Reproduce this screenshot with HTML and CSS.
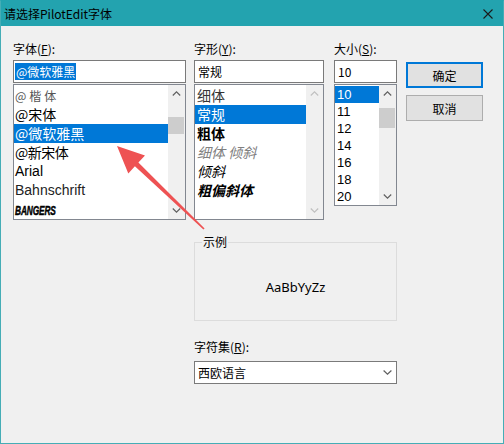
FILE: index.html
```html
<!DOCTYPE html>
<html lang="zh-CN">

<head>
    <meta charset="UTF-8">
    <meta name="viewport" content="width=device-width, initial-scale=1.0">
    <title>请选择PilotEdit字体</title>
    <link rel="stylesheet" href="styles.css">
</head>

<body>
    <div class="window">
        <div class="titlebar">
            <span class="title">请选择PilotEdit字体</span>
            <svg class="close" width="10" height="10" viewBox="0 0 10 10">
                <path d="M0.5 0.5 L9.5 9.5 M9.5 0.5 L0.5 9.5" stroke="#1a1a1a" stroke-width="1.1" fill="none" />
            </svg>
        </div>

        <div class="dialog">
            <div class="top-row">
                <!-- font family -->
                <div class="col col-font">
                    <label class="label">字体(<u>F</u>):</label>
                    <div class="field"><span class="picked">@微软雅黑</span></div>
                    <div class="listbox list-font">
                        <ul class="items">
                            <li class="f-kai">@楷体</li>
                            <li>@宋体</li>
                            <li class="selected">@微软雅黑</li>
                            <li class="f-nsong">@新宋体</li>
                            <li class="f-latin">Arial</li>
                            <li class="f-latin f-bahn">Bahnschrift</li>
                            <li><span class="f-bangers">BANGERS</span></li>
                        </ul>
                        <div class="scrollbar">
                            <span class="sb-btn">
                                <svg width="9" height="5" viewBox="0 0 9 5"><polyline points="0.8,4.5 4.5,0.9 8.2,4.5" /></svg>
                            </span>
                            <span class="sb-track"><span class="thumb thumb-font"></span></span>
                            <span class="sb-btn">
                                <svg width="9" height="5" viewBox="0 0 9 5"><polyline points="0.8,0.5 4.5,4.1 8.2,0.5" /></svg>
                            </span>
                        </div>
                    </div>
                </div>

                <!-- font style -->
                <div class="col col-style">
                    <label class="label">字形(<u>Y</u>):</label>
                    <div class="field field-pad">常规</div>
                    <div class="listbox">
                        <ul class="items items-pad">
                            <li class="s-thin">细体</li>
                            <li class="selected">常规</li>
                            <li class="s-bold">粗体</li>
                            <li class="s-thin-italic">细体 倾斜</li>
                            <li class="s-italic">倾斜</li>
                            <li class="s-bold-italic">粗偏斜体</li>
                        </ul>
                        <div class="scrollbar disabled">
                            <span class="sb-btn">
                                <svg width="9" height="5" viewBox="0 0 9 5"><polyline points="0.8,4.5 4.5,0.9 8.2,4.5" /></svg>
                            </span>
                            <span class="sb-track"></span>
                            <span class="sb-btn">
                                <svg width="9" height="5" viewBox="0 0 9 5"><polyline points="0.8,0.5 4.5,4.1 8.2,0.5" /></svg>
                            </span>
                        </div>
                    </div>
                </div>

                <!-- font size -->
                <div class="col col-size">
                    <label class="label">大小(<u>S</u>):</label>
                    <div class="field field-pad">10</div>
                    <div class="listbox list-size">
                        <ul class="items items-pad">
                            <li class="selected">10</li>
                            <li>11</li>
                            <li>12</li>
                            <li>14</li>
                            <li>16</li>
                            <li>18</li>
                            <li>20</li>
                        </ul>
                        <div class="scrollbar">
                            <span class="sb-btn">
                                <svg width="9" height="5" viewBox="0 0 9 5"><polyline points="0.8,4.5 4.5,0.9 8.2,4.5" /></svg>
                            </span>
                            <span class="sb-track"><span class="thumb thumb-size"></span></span>
                            <span class="sb-btn">
                                <svg width="9" height="5" viewBox="0 0 9 5"><polyline points="0.8,0.5 4.5,4.1 8.2,0.5" /></svg>
                            </span>
                        </div>
                    </div>
                </div>

                <div class="buttons">
                    <button type="button" class="btn btn-default">确定</button>
                    <button type="button" class="btn">取消</button>
                </div>
            </div>

            <div class="lower">
                <fieldset class="sample-group">
                    <legend>示例</legend>
                    <div class="sample">AaBbYyZz</div>
                </fieldset>

                <label class="label charset-label">字符集(<u>R</u>):</label>
                <div class="combo">
                    <span>西欧语言</span>
                    <svg width="9" height="5" viewBox="0 0 9 5"><polyline points="0.6,0.5 4.5,4.2 8.4,0.5" /></svg>
                </div>
            </div>
        </div>

        <!-- red pointer drawn on top of the dialog -->
        <svg class="pointer" width="504" height="444" viewBox="0 0 504 444">
            <polygon points="117,146 145,155.5 138.4,162.6 204.6,228.4 203.4,229.6 134.9,166.3 128.3,173.6" fill="#ee5253" />
        </svg>
    </div>
</body>

</html>
```

FILE: styles.css
```css
body {
    margin: 0;
    background-color: #f0f0f0;
    font-family: "Noto Sans CJK SC", "Noto Sans", sans-serif;
    font-size: 12px;
    color: #000;
}

.window {
    position: relative;
    width: 504px;
    height: 444px;
    box-sizing: border-box;
    border: 1px solid #45adb6;
    border-top-color: #23a3af;
    background-color: #f0f0f0;
}

.titlebar {
    display: flex;
    align-items: center;
    justify-content: space-between;
    height: 25px;
    padding-left: 3px;
    background-color: #23a3af;
}

.title {
    font-size: 12px;
    line-height: 16px;
}

.close {
    margin-right: 10px;
}

.dialog {
    padding: 15px 0 0 12px;
}

.top-row {
    display: flex;
}

.col-font {
    width: 173px;
    margin-right: 8px;
}

.col-style {
    width: 130px;
    margin-right: 10px;
}

.col-size {
    width: 63px;
    margin-right: 9px;
}

.label {
    display: block;
    height: 16px;
    line-height: 16px;
    margin-bottom: 3px;
    white-space: nowrap;
}

/* text boxes above the lists */
.field {
    height: 23px;
    box-sizing: border-box;
    border: 1px solid #7a7a7a;
    background-color: #fff;
    padding: 2px 1px;
    line-height: 17px;
    margin-bottom: 1px;
    white-space: nowrap;
}

.field-pad {
    padding-left: 3px;
}

.picked {
    background-color: #0078d7;
    color: #fff;
    padding: 0 1px;
}

.listbox {
    display: flex;
    height: 136px;
    box-sizing: border-box;
    border: 1px solid #828790;
    background-color: #fff;
}

.list-size {
    height: 122px;
}

.items {
    flex: 1;
    list-style: none;
    margin: 0;
    padding: 1px 0 0;
    overflow: hidden;
}

.items li {
    height: 19px;
    line-height: 19px;
    font-size: 14px;
    padding-left: 1px;
    white-space: nowrap;
}

.items-pad li {
    padding-left: 2px;
}

.list-size .items li {
    height: 17px;
    line-height: 17px;
    font-size: 13px;
    font-family: "Liberation Sans", sans-serif;
}

.items li.selected {
    background-color: #0078d7;
    color: #fff;
}

/* font list entries shown in their own face */
.f-kai {
    color: #555;
    letter-spacing: 3px;
}

.items li.f-kai {
    font-size: 12px;
}

.f-nsong {
    letter-spacing: -0.5px;
}

.f-latin {
    font-family: "Liberation Sans", sans-serif;
}

.f-bahn {
    color: #222;
}

.f-bangers {
    display: inline-block;
    font-family: "Liberation Sans", sans-serif;
    font-size: 13px;
    font-weight: 900;
    font-style: italic;
    transform: scaleX(0.64);
    transform-origin: left center;
    letter-spacing: -0.2px;
    -webkit-text-stroke: 0.5px #000;
}

.s-thin {
    color: #333;
}

.s-bold {
    font-weight: bold;
}

.s-thin-italic {
    color: #808080;
    font-style: italic;
}

.s-italic {
    font-style: italic;
}

.s-bold-italic {
    font-weight: bold;
    font-style: italic;
}

/* scroll bars */
.scrollbar {
    display: flex;
    flex-direction: column;
    width: 17px;
    background-color: #f0f0f0;
}

.sb-btn {
    display: flex;
    align-items: center;
    justify-content: center;
    height: 17px;
}

.sb-btn polyline,
.combo polyline {
    fill: none;
    stroke: #606060;
    stroke-width: 1.2;
}

.disabled .sb-btn polyline {
    stroke: #c0c0c0;
}

.sb-track {
    flex: 1;
}

.thumb {
    display: block;
    background-color: #cdcdcd;
    margin-right: 1px;
}

.thumb-font {
    margin-top: 15px;
    height: 17px;
}

.thumb-size {
    margin-top: 6px;
    height: 20px;
}

/* buttons */
.buttons {
    width: 77px;
    padding-top: 21px;
}

.btn {
    display: block;
    width: 77px;
    height: 26px;
    box-sizing: border-box;
    border: 1px solid #adadad;
    background-color: #e1e1e1;
    font-family: "Noto Sans CJK SC", sans-serif;
    font-size: 12px;
    color: #000;
    padding: 0;
    margin-bottom: 7px;
}

.btn-default {
    border: 2px solid #0078d7;
}

/* sample and charset */
.lower {
    margin-left: 181px;
    width: 203px;
}

.sample-group {
    margin: 14px 0 0;
    padding: 0;
    border: 1px solid #dcdcdc;
    min-width: 0;
}

.sample-group legend {
    margin-left: 7px;
    padding: 0 1px;
    line-height: 16px;
    font-size: 12px;
}

.sample {
    display: flex;
    align-items: center;
    justify-content: center;
    height: 70px;
    box-sizing: border-box;
    padding-top: 4px;
    font-family: "Noto Sans", sans-serif;
    font-size: 13px;
}

.charset-label {
    margin-top: 18px;
    margin-bottom: 6px;
}

.combo {
    display: flex;
    align-items: center;
    justify-content: space-between;
    height: 23px;
    box-sizing: border-box;
    border: 1px solid #7a7a7a;
    background-color: #fff;
    padding: 0 4px 0 3px;
}

.pointer {
    position: absolute;
    left: -1px;
    top: -1px;
    pointer-events: none;
}
```
